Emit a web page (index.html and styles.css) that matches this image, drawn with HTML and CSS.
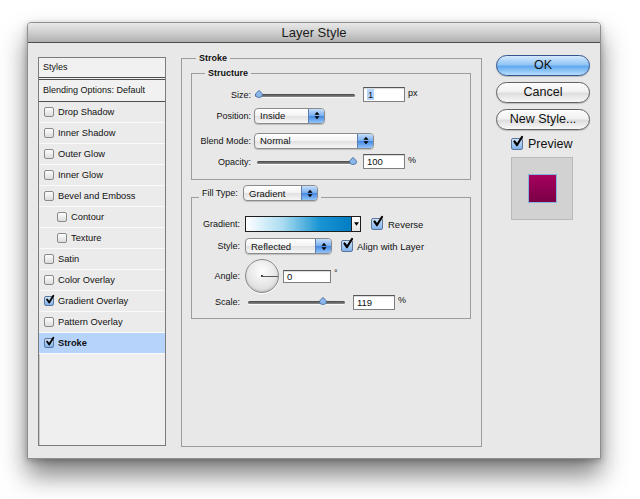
FILE: index.html
```html
<!DOCTYPE html>
<html lang="en">
<head>
    <meta charset="UTF-8">
    <title>Layer Style</title>
    <link rel="stylesheet" href="styles.css">
</head>
<body>
    <div class="desk">
        <div class="window">
            <div class="titlebar">Layer Style</div>
            <div class="content">

                <!-- effects list on the left -->
                <div class="styles-list">
                    <div class="list-head">Styles</div>
                    <div class="list-head blending">Blending Options: Default</div>
                    <ul class="effects">
                        <li><span class="check"></span>Drop Shadow</li>
                        <li><span class="check"></span>Inner Shadow</li>
                        <li><span class="check"></span>Outer Glow</li>
                        <li><span class="check"></span>Inner Glow</li>
                        <li><span class="check"></span>Bevel and Emboss</li>
                        <li class="sub"><span class="check"></span>Contour</li>
                        <li class="sub"><span class="check"></span>Texture</li>
                        <li><span class="check"></span>Satin</li>
                        <li><span class="check"></span>Color Overlay</li>
                        <li><span class="check checked"><svg viewBox="0 0 12 12"><path d="M2.5 5.5 L5 9 L10 1"/></svg></span>Gradient Overlay</li>
                        <li><span class="check"></span>Pattern Overlay</li>
                        <li class="selected"><span class="check checked"><svg viewBox="0 0 12 12"><path d="M2.5 5.5 L5 9 L10 1"/></svg></span>Stroke</li>
                    </ul>
                </div>

                <!-- stroke settings -->
                <fieldset class="group main">
                    <legend>Stroke</legend>

                    <fieldset class="group structure">
                        <legend>Structure</legend>
                        <div class="form-row">
                            <span class="lbl">Size:</span>
                            <div class="slider size-slider">
                                <div class="track"></div>
                                <svg class="thumb" style="left: 0px" viewBox="0 0 8 8"><path d="M4 .5 C5.5 2 7.5 3 7.5 5 A3.5 2.5 0 0 1 .5 5 C.5 3 2.5 2 4 .5Z"/></svg>
                            </div>
                            <span class="field num"><span class="sel">1</span></span>
                            <span class="unit">px</span>
                        </div>
                        <div class="form-row">
                            <span class="lbl">Position:</span>
                            <div class="popup pos-popup">Inside<span class="arrows"><svg viewBox="0 0 7 10"><path d="M3.5 0.5L6.5 4H0.5Z M3.5 9.5L6.5 6H0.5Z"/></svg></span></div>
                        </div>
                        <div class="form-row spaced">
                            <span class="lbl">Blend Mode:</span>
                            <div class="popup blend-popup">Normal<span class="arrows"><svg viewBox="0 0 7 10"><path d="M3.5 0.5L6.5 4H0.5Z M3.5 9.5L6.5 6H0.5Z"/></svg></span></div>
                        </div>
                        <div class="form-row">
                            <span class="lbl">Opacity:</span>
                            <div class="slider opacity-slider">
                                <div class="track"></div>
                                <svg class="thumb" style="left: 92px" viewBox="0 0 8 8"><path d="M4 .5 C5.5 2 7.5 3 7.5 5 A3.5 2.5 0 0 1 .5 5 C.5 3 2.5 2 4 .5Z"/></svg>
                            </div>
                            <span class="field num">100</span>
                            <span class="unit">%</span>
                        </div>
                    </fieldset>

                    <fieldset class="group fill">
                        <legend>
                            <span class="legend-lbl">Fill Type:</span>
                            <span class="popup fill-popup">Gradient<span class="arrows"><svg viewBox="0 0 7 10"><path d="M3.5 0.5L6.5 4H0.5Z M3.5 9.5L6.5 6H0.5Z"/></svg></span></span>
                        </legend>
                        <div class="fill-row gradient-row">
                            <span class="lbl">Gradient:</span>
                            <div class="gradient">
                                <div class="ramp"></div>
                                <div class="drop"><svg viewBox="0 0 6 4"><path d="M0 0H6L3 4Z"/></svg></div>
                            </div>
                            <span class="check big checked reverse-check"><svg viewBox="0 0 12 12"><path d="M2.5 5.5 L5 9 L10 1"/></svg></span>
                            <span class="check-text">Reverse</span>
                        </div>
                        <div class="fill-row style-row">
                            <span class="lbl">Style:</span>
                            <div class="popup style-popup">Reflected<span class="arrows"><svg viewBox="0 0 7 10"><path d="M3.5 0.5L6.5 4H0.5Z M3.5 9.5L6.5 6H0.5Z"/></svg></span></div>
                            <span class="check big checked align-check"><svg viewBox="0 0 12 12"><path d="M2.5 5.5 L5 9 L10 1"/></svg></span>
                            <span class="check-text">Align with Layer</span>
                        </div>
                        <div class="fill-row angle-row">
                            <span class="lbl">Angle:</span>
                            <div class="dial"></div>
                            <span class="field angle-field">0</span>
                            <span class="degree">°</span>
                        </div>
                        <div class="fill-row scale-row">
                            <span class="lbl">Scale:</span>
                            <div class="slider scale-slider">
                                <div class="track"></div>
                                <svg class="thumb" style="left: 71px" viewBox="0 0 8 8"><path d="M4 .5 C5.5 2 7.5 3 7.5 5 A3.5 2.5 0 0 1 .5 5 C.5 3 2.5 2 4 .5Z"/></svg>
                            </div>
                            <span class="field num">119</span>
                            <span class="unit">%</span>
                        </div>
                    </fieldset>
                </fieldset>

                <!-- buttons and preview -->
                <div class="actions">
                    <button class="btn btn-default">OK</button>
                    <button class="btn">Cancel</button>
                    <button class="btn">New Style...</button>
                    <div class="preview-toggle">
                        <span class="check big checked"><svg viewBox="0 0 12 12"><path d="M2.5 5.5 L5 9 L10 1"/></svg></span>
                        <span>Preview</span>
                    </div>
                    <div class="swatch"><div class="swatch-fill"></div></div>
                </div>

            </div>
        </div>
    </div>
</body>
</html>
```

FILE: styles.css
```css
* {
    box-sizing: border-box;
}

body {
    margin: 0;
    background: #fff;
    font-family: "Liberation Sans", Arial, sans-serif;
    font-size: 9px;
    color: #111;
}

.desk {
    padding: 22px 0 0 27px;
    height: 499px;
    overflow: hidden;
}

.window {
    width: 574px;
    height: 437px;
    background: #e8e8e8;
    border: 1px solid #8e8e8e;
    border-radius: 4px 4px 0 0;
    box-shadow: 0 16px 26px rgba(0, 0, 0, 0.5), 0 2px 6px rgba(0, 0, 0, 0.25);
    display: flex;
    flex-direction: column;
}

.titlebar {
    height: 20px;
    border-bottom: 1px solid #4d4d4d;
    border-radius: 3px 3px 0 0;
    background: linear-gradient(#e9e9e9, #cfcfcf 50%, #b0b0b0);
    text-align: center;
    font-size: 13px;
    line-height: 19px;
    color: #1c1c1c;
}

.content {
    display: flex;
    align-items: flex-start;
    padding: 10px 0 0 10px;
}

/* ---- styles list ---- */

.styles-list {
    width: 128px;
    height: 389px;
    margin-top: 4px;
    border: 1px solid #7b7b7b;
    background: #efefef;
    box-shadow: inset 1px 1px 0 #c9c9c9;
}

.list-head {
    height: 22px;
    padding-left: 4px;
    line-height: 19px;
    border-bottom: 3px double #4f4f4f;
    background: #f1f1f1;
}

.list-head.blending {
    height: 22px;
    line-height: 21px;
    border-bottom: 1px solid #4f4f4f;
}

.effects {
    list-style: none;
    margin: 0;
    padding: 0;
}

.effects li {
    height: 21px;
    display: flex;
    align-items: center;
    padding-left: 5px;
    border-bottom: 1px solid #fafafa;
    background: #ebebeb;
    font-size: 9.3px;
}

.effects li.sub {
    padding-left: 18px;
}

.effects li.selected {
    background: #b6d4fb;
    font-weight: bold;
}

/* ---- checkboxes ---- */

.check {
    position: relative;
    flex: none;
    width: 10px;
    height: 10px;
    margin-right: 4px;
    border: 1px solid #8a8a8a;
    border-radius: 2px;
    background: linear-gradient(#fdfdfd, #dcdcdc);
}

.check.checked {
    border-color: #5d7599;
    background: linear-gradient(#d2e5fb, #7fb2ec);
}

.check svg {
    position: absolute;
    left: 0;
    top: -2px;
    width: 10px;
    height: 10px;
    overflow: visible;
}

.check path {
    fill: none;
    stroke: #000;
    stroke-width: 2.2;
    stroke-linecap: round;
    stroke-linejoin: round;
}

.check.big {
    width: 12px;
    height: 12px;
}

.check.big svg {
    left: 0;
    top: -3px;
    width: 12px;
    height: 12px;
}

.check-text {
    font-size: 9.5px;
}

/* ---- group boxes ---- */

.group {
    margin: 0;
    min-width: 0;
    border: 1px solid #9c9c9c;
}

.group > legend {
    font-weight: bold;
    line-height: 11px;
    padding: 0 3px;
}

.main {
    width: 301px;
    height: 394px;
    margin-left: 15px;
    padding: 4px 0 0;
}

.main > legend {
    margin-left: 14px;
}

.structure {
    margin: 0 10px 0 9px;
    padding: 5px 0 7px;
}

.structure > legend {
    margin-left: 13px;
}

.form-row {
    display: flex;
    align-items: center;
    height: 21px;
}

.form-row.spaced {
    margin-top: 4px;
}

.structure .lbl {
    width: 59px;
    text-align: right;
}

.fill {
    margin: 5px 10px 0 9px;
    padding: 0 0 9px;
}

.fill > legend {
    display: flex;
    align-items: center;
    margin-left: 7px;
    padding: 0 3px 8px;
    font-weight: normal;
}

.legend-lbl {
    width: 37px;
    margin-right: 4px;
}

.fill-row {
    display: flex;
    align-items: center;
}

.fill .lbl {
    width: 48px;
    margin-right: 5px;
    text-align: right;
}

.gradient-row {
    margin-top: 7px;
    height: 16px;
}

.style-row {
    margin-top: 6px;
    height: 16px;
}

.angle-row {
    margin-top: 5px;
    height: 34px;
}

.scale-row {
    margin-top: 2px;
    height: 14px;
}

/* ---- controls ---- */

.popup {
    display: flex;
    align-items: center;
    height: 16px;
    padding-left: 5px;
    border: 1px solid #8b8b8b;
    border-radius: 4px;
    background: linear-gradient(#ffffff, #f3f3f3 50%, #e1e1e1 51%, #f6f6f6);
    box-shadow: 0 1px 1px rgba(0, 0, 0, 0.18);
    font-size: 9.5px;
    font-weight: normal;
}

.popup .arrows {
    margin-left: auto;
    width: 16px;
    height: 100%;
    display: flex;
    align-items: center;
    justify-content: center;
    border-left: 1px solid #5b7eae;
    border-radius: 0 3px 3px 0;
    background: linear-gradient(#c6defa, #77adee 50%, #4488e4 51%, #92c4f6);
}

.popup .arrows svg {
    width: 6px;
    height: 9px;
}

.pos-popup {
    width: 71px;
    margin-left: 3px;
}

.blend-popup {
    width: 120px;
    margin-left: 3px;
}

.fill-popup {
    width: 75px;
}

.style-popup {
    width: 87px;
}

.slider {
    position: relative;
    height: 10px;
}

.slider .track {
    position: absolute;
    left: 0;
    right: 0;
    top: 4px;
    height: 3px;
    border-radius: 2px;
    background: linear-gradient(#454545, #8d8d8d);
    box-shadow: 0 1px 0 #fafafa;
}

.slider .thumb {
    position: absolute;
    top: 0;
    width: 8px;
    height: 8px;
}

.thumb path {
    fill: #8bb7ec;
    stroke: #3f6593;
    stroke-width: 0.8;
}

.size-slider {
    width: 100px;
    margin-left: 4px;
}

.opacity-slider {
    width: 98px;
    margin-left: 6px;
}

.scale-slider {
    width: 97px;
    margin-left: 3px;
}

.field {
    display: flex;
    align-items: center;
    height: 15px;
    padding-left: 3px;
    border: 1px solid #7f7f7f;
    border-top-color: #555;
    background: #fff;
    box-shadow: inset 0 1px 1px rgba(0, 0, 0, 0.15);
    font-size: 9.5px;
}

.field.num {
    width: 42px;
    margin-left: 8px;
}

.sel {
    background: #b5d5ff;
    padding: 0 1px;
}

.unit {
    margin-left: 3px;
    align-self: flex-start;
    margin-top: 4px;
}

.scale-row .unit {
    margin-top: 0;
}

.gradient {
    display: flex;
    width: 116px;
    height: 16px;
    border: 1px solid #1e1e1e;
}

.ramp {
    flex: 1;
    background: linear-gradient(90deg, #ffffff, #a9dcf1 35%, #1a95d3 70%, #007cc3);
}

.drop {
    width: 9px;
    display: flex;
    align-items: center;
    justify-content: center;
    border-left: 1px solid #1e1e1e;
    background: linear-gradient(#fff, #e3e3e3);
}

.drop svg {
    width: 5px;
    height: 4px;
}

.reverse-check {
    margin-left: 10px;
    margin-right: 5px;
}

.align-check {
    margin-left: 9px;
    margin-right: 4px;
}

.dial {
    position: relative;
    width: 34px;
    height: 34px;
    border: 1px solid #8a8a8a;
    border-radius: 50%;
    background: radial-gradient(circle at 50% 35%, #fdfdfd, #e4e4e4 60%, #cdcdcd);
    box-shadow: inset 0 -1px 2px rgba(0, 0, 0, 0.15), 0 1px 1px rgba(255, 255, 255, 0.9);
}

.dial::before {
    content: "";
    position: absolute;
    left: 15px;
    top: 15px;
    width: 2px;
    height: 2px;
    background: #444;
}

.dial::after {
    content: "";
    position: absolute;
    left: 16px;
    top: 15.5px;
    width: 16px;
    height: 1px;
    background: #5a5a5a;
}

.angle-field {
    width: 48px;
    height: 13px;
    margin-left: 4px;
}

.degree {
    align-self: flex-start;
    margin: 9px 0 0 3px;
}

/* ---- right column ---- */

.actions {
    width: 94px;
    margin: 2px 0 0 14px;
    display: flex;
    flex-direction: column;
}

.btn {
    display: block;
    width: 94px;
    height: 21px;
    margin: 0 0 6px;
    padding: 0;
    border: 1px solid #626262;
    border-radius: 11px;
    background: linear-gradient(#fdfdfd, #f1f1f1 45%, #dddddd 55%, #f8f8f8);
    box-shadow: 0 1px 1px rgba(0, 0, 0, 0.2);
    font-family: inherit;
    font-size: 12.5px;
    line-height: 19px;
    color: #111;
}

.btn-default {
    border-color: #33558e;
    background: linear-gradient(#d6e9fc, #92c5f6 45%, #62a9ef 55%, #b6defd);
}

.preview-toggle {
    display: flex;
    align-items: center;
    height: 22px;
    margin-top: -3px;
    padding-left: 15px;
    font-size: 12.5px;
}

.preview-toggle .check {
    margin-right: 5px;
}

.swatch {
    width: 62px;
    height: 63px;
    margin: 2px 0 0 15px;
    display: flex;
    align-items: center;
    justify-content: center;
    border: 1px solid #b9b9b9;
    background: #d2d2d2;
}

.swatch-fill {
    width: 29px;
    height: 29px;
    border: 1px solid #86b5e0;
    background: linear-gradient(#a6005e, #7a0045);
}
```
